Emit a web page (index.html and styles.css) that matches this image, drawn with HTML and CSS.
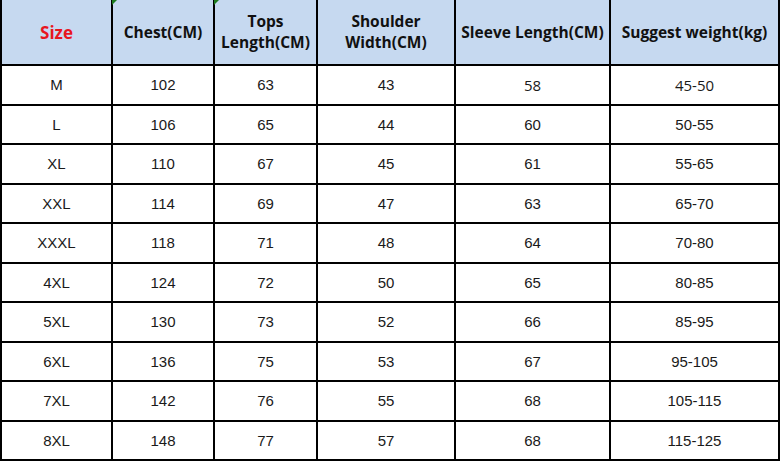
FILE: index.html
```html
<!DOCTYPE html>
<html>
<head>
<meta charset="utf-8">
<link rel="stylesheet" href="styles.css">
</head>
<body>
<div class="chart">
  <div class="cell head size">Size</div>
  <div class="cell head mark">Chest(CM)</div>
  <div class="cell head mark">Tops<br>Length(CM)</div>
  <div class="cell head">Shoulder<br>Width(CM)</div>
  <div class="cell head">Sleeve Length(CM)</div>
  <div class="cell head">Suggest weight(kg)</div>

  <div class="cell">M</div><div class="cell">102</div><div class="cell">63</div><div class="cell">43</div><div class="cell alt">58</div><div class="cell alt">45-50</div>
  <div class="cell">L</div><div class="cell">106</div><div class="cell">65</div><div class="cell">44</div><div class="cell">60</div><div class="cell">50-55</div>
  <div class="cell">XL</div><div class="cell">110</div><div class="cell">67</div><div class="cell">45</div><div class="cell">61</div><div class="cell">55-65</div>
  <div class="cell">XXL</div><div class="cell">114</div><div class="cell">69</div><div class="cell">47</div><div class="cell">63</div><div class="cell">65-70</div>
  <div class="cell">XXXL</div><div class="cell">118</div><div class="cell">71</div><div class="cell">48</div><div class="cell">64</div><div class="cell">70-80</div>
  <div class="cell">4XL</div><div class="cell">124</div><div class="cell">72</div><div class="cell">50</div><div class="cell">65</div><div class="cell">80-85</div>
  <div class="cell">5XL</div><div class="cell">130</div><div class="cell">73</div><div class="cell">52</div><div class="cell">66</div><div class="cell">85-95</div>
  <div class="cell">6XL</div><div class="cell">136</div><div class="cell">75</div><div class="cell">53</div><div class="cell">67</div><div class="cell">95-105</div>
  <div class="cell">7XL</div><div class="cell">142</div><div class="cell">76</div><div class="cell">55</div><div class="cell">68</div><div class="cell">105-115</div>
  <div class="cell">8XL</div><div class="cell">148</div><div class="cell">77</div><div class="cell">57</div><div class="cell">68</div><div class="cell">115-125</div>
</div>
</body>
</html>
```

FILE: styles.css
```css
html, body {
  margin: 0;
  padding: 0;
  background: #fff;
}

.chart {
  width: 780px;
  height: 461px;
  box-sizing: border-box;
  padding: 0 1px 2px 2px;
  background: #000;
  display: grid;
  grid-template-columns: 109px 100px 101px 136px 153px 167px;
  grid-template-rows: 64px repeat(10, 1fr);
  column-gap: 2px;
  row-gap: 2px;
  font-family: "Liberation Sans", Arial, sans-serif;
  font-size: 15px;
  color: #1a1a1a;
}

.cell {
  background: #fff;
  display: flex;
  align-items: center;
  justify-content: center;
  text-align: center;
  position: relative;
}

.head {
  background: #c6d9f0;
  font-family: "Open Sans", "DejaVu Sans", sans-serif;
  font-weight: 700;
  font-size: 15.5px;
  line-height: 21px;
  color: #111;
}

.size {
  color: #e8161e;
  font-size: 17px;
}

.mark::before {
  content: "";
  position: absolute;
  top: 0;
  left: -1px;
  border-top: 5px solid #1d7a1d;
  border-right: 5px solid transparent;
}

.alt {
  font-family: "Open Sans", sans-serif;
  font-size: 15px;
}
```
